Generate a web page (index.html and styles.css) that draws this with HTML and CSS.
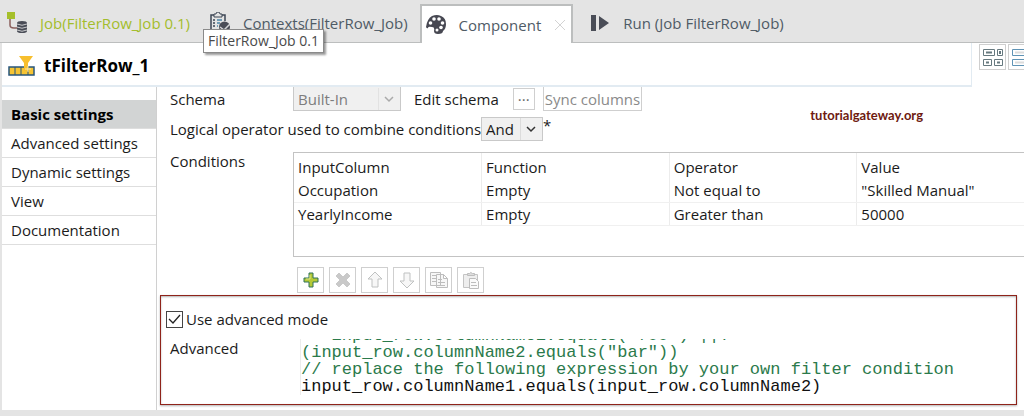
FILE: index.html
```html
<!DOCTYPE html>
<html lang="en">
<head>
    <meta charset="UTF-8">
    <meta name="viewport" content="width=device-width, initial-scale=1.0">
    <title>tFilterRow_1 - Component</title>
    <link rel="stylesheet" href="styles.css">
</head>
<body>
    <nav class="tabs">
        <a class="tab tab-job" href="#job">
            <svg class="tab-icon" width="22" height="22" viewBox="0 0 22 22">
                <path d="M4 6v7q0 3 4 3h4" fill="none" stroke="#8a5f5c" stroke-width="1.5"/>
                <rect x="1" y="0" width="8" height="7" fill="#a5bf2a"/>
                <path d="M11 11q0-2 5-2t5 2v8q0 2-5 2t-5-2z" fill="#4a4d57"/>
                <path d="M11 12q5 2.500 10 0M11 15q5 2.500 10 0M11 18q5 2.500 10 0" fill="none" stroke="#c9cacc"/>
            </svg>
            <span>Job(FilterRow_Job 0.1)</span>
        </a>
        <a class="tab tab-contexts" href="#contexts">
            <svg class="tab-icon" width="22" height="22" viewBox="0 0 22 22">
                <path d="M5 3H2v17h8M13 3h3v6" fill="none" stroke="#3c4654" stroke-width="1.500"/>
                <path d="M5 4V2h2q0-2 2-2t2 2h2v3H5z" fill="#e4e4e4" stroke="#3c4654"/>
                <path d="M4 8h2M4 11h2M4 14h2" stroke="#3c4654" stroke-width="1.500"/>
                <path d="M8 8h5M8 11h3M8 14h1" stroke="#4c87a8" stroke-width="1.500"/>
                <circle cx="15.500" cy="15" r="5.500" fill="#4a4d57"/>
                <path d="M11 15l4 3 6-6" fill="none" stroke="#d5d6d8" stroke-width="1.500"/>
            </svg>
            <span>Contexts(FilterRow_Job)</span>
            <span class="tooltip" role="tooltip">FilterRow_Job 0.1</span>
        </a>
        <div class="tab tab-active">
            <svg class="tab-icon" width="20" height="20" viewBox="0 0 20 20">
                <path d="M0 12Q1 4 6 1q5-2 9 0 5 2 5 8 0 5-3 7 0 3-5 3-4 0-4-3 1-4-2-4-4-1-4 1-1 1-2-1z" fill="#474852"/>
                <g fill="#fff">
                    <circle cx="4.500" cy="8" r="1.800"/>
                    <circle cx="8" cy="4" r="1.800"/>
                    <circle cx="13" cy="4" r="1.800"/>
                    <circle cx="16.500" cy="8" r="1.800"/>
                    <circle cx="15" cy="12.500" r="1.800"/>
                    <circle cx="11" cy="15" r="1.500"/>
                </g>
            </svg>
            <a href="#component">Component</a>
            <button class="tab-close" type="button" aria-label="Close">
                <svg width="12" height="12" viewBox="0 0 12 12"><path d="M1 1l10 10M11 1L1 11" stroke="#d3d3d3"/></svg>
            </button>
        </div>
        <a class="tab tab-run" href="#run">
            <svg class="tab-icon" width="18" height="16" viewBox="0 0 18 16">
                <path d="M0 0h5v16H0zM8 1l10 7-10 7z" fill="#4a4d57"/>
            </svg>
            <span>Run (Job FilterRow_Job)</span>
        </a>
    </nav>

    <div class="view">
        <header class="view-header">
            <div class="view-title">
                <svg width="28" height="22" viewBox="0 0 28 22">
                    <rect x="1" y="12" width="25" height="8" fill="#f6c433" stroke="#27567c" stroke-width="1.500"/>
                    <path d="M7 12v8M13 12v8M20 12v8" stroke="#27567c"/>
                    <path d="M11 1h14l-5 7v8h-4V8z" fill="#f7bf2e"/>
                    <path d="M20 11v6M17 14h6" stroke="#fbe7a5"/>
                </svg>
                <h1>tFilterRow_1</h1>
            </div>
            <div class="layout-buttons">
                <button type="button" aria-label="Grid layout">
                    <svg width="20" height="18" viewBox="0 0 20 18">
                        <g fill="none" stroke="#66797f" stroke-width="1">
                            <path d="M.5 1.500h11v6H.5zM14.500 1.500h5v6h-5zM.5 11.500h8v6h-8zM11.500 11.500h8v6h-8z"/>
                            <path d="M3 4.500h6M17 3v3M3 14.500h3M14 14.500h3" stroke-width="2"/>
                        </g>
                    </svg>
                </button>
                <button type="button" aria-label="List layout">
                    <svg width="20" height="18" viewBox="0 0 20 18">
                        <path d="M.5 1.500h19v6H.5zM.5 11.500h19v6H.5z" fill="#fff" stroke="#5f93b5"/>
                        <path d="M3 4.500h14M3 14.500h14" stroke="#dcdcdc" stroke-width="2"/>
                    </svg>
                </button>
            </div>
        </header>

        <div class="view-body">
            <nav class="sidebar">
                <a class="active" href="#basic">Basic settings</a>
                <a href="#advanced">Advanced settings</a>
                <a href="#dynamic">Dynamic settings</a>
                <a href="#view">View</a>
                <a href="#documentation">Documentation</a>
            </nav>

            <main class="settings">
                <div class="settings-top">
                    <div class="settings-rows">
                        <div class="row row-schema">
                            <label class="row-label" for="schema">Schema</label>
                            <select id="schema" class="select select-schema" disabled>
                                <option>Built-In</option>
                            </select>
                            <label class="edit-label" for="editSchema">Edit schema</label>
                            <button id="editSchema" class="edit-button" type="button">···</button>
                            <button class="sync-button" type="button" disabled>Sync columns</button>
                        </div>
                        <div class="row row-operator">
                            <label for="operator">Logical operator used to combine conditions</label>
                            <select id="operator" class="select select-operator">
                                <option>And</option>
                                <option>Or</option>
                            </select>
                            <span class="required">*</span>
                        </div>
                    </div>
                    <div class="site-mark">tutorialgateway.org</div>
                </div>

                <div class="conditions">
                    <div class="row-label" id="conditionsLabel">Conditions</div>
                    <div class="conditions-field">
                        <div class="table-box">
                            <table aria-labelledby="conditionsLabel">
                                <thead>
                                    <tr><th>InputColumn</th><th>Function</th><th>Operator</th><th>Value</th></tr>
                                </thead>
                                <tbody>
                                    <tr><td>Occupation</td><td>Empty</td><td>Not equal to</td><td>"Skilled Manual"</td></tr>
                                    <tr><td>YearlyIncome</td><td>Empty</td><td>Greater than</td><td>50000</td></tr>
                                </tbody>
                            </table>
                        </div>
                        <div class="table-actions">
                            <button type="button" aria-label="Add">
                                <svg width="18" height="18" viewBox="0 0 18 18"><path d="M7 2h4v5h5v4h-5v5H7v-5H2V7h5z" fill="#b5c936" stroke="#2f7358"/><path d="M8 4v4H4" fill="none" stroke="#dde28c"/></svg>
                            </button>
                            <button type="button" aria-label="Remove" disabled>
                                <svg width="18" height="18" viewBox="0 0 18 18"><path d="M5 2l4 4 4-4 3 3-4 4 4 4-3 3-4-4-4 4-3-3 4-4-4-4z" fill="#c9c9c9" stroke="#c9c9c9"/></svg>
                            </button>
                            <button type="button" aria-label="Move up" disabled>
                                <svg width="18" height="18" viewBox="0 0 18 18"><path d="M9 1l7 7h-4v8H6V8H2z" fill="#f7f7f7" stroke="#bfc1c1"/></svg>
                            </button>
                            <button type="button" aria-label="Move down" disabled>
                                <svg width="18" height="18" viewBox="0 0 18 18"><path d="M9 17l7-7h-4V2H6v8H2z" fill="#f7f7f7" stroke="#bfc1c1"/></svg>
                            </button>
                            <button type="button" aria-label="Copy" disabled>
                                <svg width="20" height="20" viewBox="0 0 20 20"><path d="M1.500 2.500h10v13h-10zM3 5.500h4M3 8.500h4M3 11.500h4M7.500 4.500h7l4 4v9h-11zM14.500 4.500v4h4M9 9.500h4M9 12.500h7M9 15.500h7" fill="#f7f7f7" stroke="#bdbdbd"/></svg>
                            </button>
                            <button type="button" aria-label="Paste" disabled>
                                <svg width="18" height="20" viewBox="0 0 18 20"><path d="M1.500 4.500h14v13h-14z" fill="#eee" stroke="#c4c4c4"/><path d="M5.500 5.500v-2h2q1-2 3 0h2v2z" fill="#ddd" stroke="#bdbdbd"/><path d="M7.500 8.500h6l3 3v7h-9zM9 12.500h5M9 15.500h6" fill="#fafafa" stroke="#bdbdbd"/></svg>
                            </button>
                        </div>
                    </div>
                </div>

                <section class="advanced">
                    <label class="advanced-toggle">
                        <input type="checkbox" checked>
                        <span>Use advanced mode</span>
                    </label>
                    <div class="advanced-row">
                        <div class="advanced-label" id="advancedLabel">Advanced</div>
                        <div class="editor" contenteditable="true" spellcheck="false" role="textbox" aria-multiline="true" aria-labelledby="advancedLabel">
                            <div class="line comment">   input_row.columnName1.equals("foo") ||!</div>
                            <div class="line comment">(input_row.columnName2.equals("bar"))</div>
                            <div class="line comment">// replace the following expression by your own filter condition</div>
                            <div class="line">input_row.columnName1.equals(input_row.columnName2)</div>
                        </div>
                    </div>
                </section>
            </main>
        </div>
    </div>
</body>
</html>
```
FILE: styles.css
```css
* { margin: 0; padding: 0; box-sizing: border-box; }
body { font-family: 'Open Sans', 'Noto Sans', sans-serif; font-size: 15px; line-height: 20px; color: #1b1b1b; background: #e4e4e4; min-height: 100vh; display: flex; flex-direction: column; overflow: hidden; }
button, select, input { font: inherit; color: inherit; }
button { display: flex; align-items: center; justify-content: center; background: #fff; border: 1px solid #cfcfcf; }
a { color: inherit; text-decoration: none; }
svg { display: block; flex: none; }

/* tabs */
.tabs { display: flex; height: 43px; padding-top: 4px; background: #e4e4e4; white-space: nowrap; color: #4f5b66; }
.tab { position: relative; display: flex; align-items: center; gap: 12px; padding: 0 12px 0 6px; border-bottom: 1px solid #bcbebe; }
.tab-job { color: #a3bd2c; padding-right: 13px; }
.tab-active { background: #fff; border: 1px solid #bcbebe; border-width: 2px 2px 0; padding: 0 5px 0 4px; gap: 13px; }
.tab-close { background: none; border: none; }
.tab-run { flex: 1; padding-left: 18px; gap: 14px; }
.tooltip { position: absolute; left: 0; top: 25px; z-index: 2; background: #fff; border: 1px solid #8a8a8a; box-shadow: 2px 2px 2px rgba(0, 0, 0, 0.4); padding: 1px 4px; color: #4a4a4a; font-size: 14px; }

/* view */
.view { flex: 1; display: flex; flex-direction: column; background: #fff; margin: 0 0 6px 2px; }
.view-header { display: flex; justify-content: space-between; gap: 7px; height: 44px; }
.view-title { flex: 1; display: flex; align-items: center; gap: 8px; padding: 4px 0 0 6px; border-right: 1px solid #e2ebf2; border-bottom: 2px solid #e2ebf2; }
.view-title h1 { font-size: 17px; line-height: 24px; font-weight: 700; color: #000; }
.layout-buttons { display: flex; gap: 2px; width: 45px; overflow: hidden; }
.layout-buttons button { flex: none; width: 27px; height: 26px; margin-top: 1px; }
.view-body { flex: 1; display: flex; }

/* sidebar */
.sidebar { width: 155px; padding-top: 13px; border-right: 1px solid #d0d0d0; }
.sidebar a { display: block; height: 29px; line-height: 28px; padding-left: 9px; border-bottom: 1px solid #dedede; }
.sidebar .active { background: #d2d4d4; color: #000; font-weight: 700; }

/* settings */
.settings { flex: 1; min-width: 0; display: flex; flex-direction: column; }
.settings-top { display: flex; align-items: center; justify-content: space-between; padding: 0 101px 0 13px; white-space: nowrap; }
.row { display: flex; }
.row-label { width: 123px; flex: none; }
.row-schema { align-items: center; height: 24px; }
.row-operator { align-items: center; height: 32px; padding-top: 4px; }
.select { appearance: none; height: 24px; padding-left: 4px; border: 1px solid #c9c9c9; border-radius: 0; background: #f0f0f0 url("data:image/svg+xml,%3Csvg xmlns='http://www.w3.org/2000/svg' width='22' height='22'%3E%3Cpath d='M.5 0v22' stroke='%23dcdcdc'/%3E%3Cpath d='M7 9l4 4 4-4' fill='none' stroke='%23333' stroke-width='1.500'/%3E%3C/svg%3E") no-repeat right center; }
.select-schema { width: 108px; border-top: none; color: #7d7d7d; opacity: 1; background-image: url("data:image/svg+xml,%3Csvg xmlns='http://www.w3.org/2000/svg' width='22' height='22'%3E%3Cpath d='M.5 0v22' stroke='%23e2e2e2'/%3E%3Cpath d='M7 9l4 4 4-4' fill='none' stroke='%23aaa' stroke-width='1.500'/%3E%3C/svg%3E"); }
.select-operator { width: 62px; }
.required { align-self: flex-start; }
.edit-label { margin: 0 14px 0 13px; }
.edit-button { width: 22px; height: 22px; margin-right: 8px; color: #666; }
.sync-button { height: 24px; padding: 0 1px; color: #8a8a8a; border-top: none; }
.site-mark { font-family: Lato, 'Open Sans', sans-serif; font-size: 13px; font-weight: 700; color: #6e1a10; }

.conditions { display: flex; padding: 9px 0 0 13px; }
.conditions .row-label { line-height: 18px; }
.conditions-field { flex: 1; min-width: 0; }
.table-box { height: 105px; border: 1px solid #c3c3c3; border-right: none; }
table { width: 100%; table-layout: fixed; border-collapse: collapse; }
th, td { height: 23px; padding: 0 4px; font-weight: 400; text-align: left; line-height: 22px; border-left: 1px solid #ececec; border-bottom: 1px solid #f0f0f0; white-space: nowrap; }
th { height: 26px; padding-top: 2px; border-bottom: none; }
th:first-child, td:first-child { border-left: none; }
th { width: 25.700%; }
th:last-child { width: auto; }
.table-actions { display: flex; gap: 5px; padding: 10px 4px 0; }
.table-actions button { width: 27px; height: 26px; }

/* advanced filter */
.advanced { flex: 1; margin: 2px 7px 5px 3px; padding: 13px 0 0 5px; border: 1px solid #8f231a; box-shadow: 0 1px 2px rgba(0, 0, 0, 0.3), inset 0 1px 2px rgba(0, 0, 0, 0.3); }
.advanced-toggle { display: flex; align-items: center; gap: 3px; width: max-content; }
.advanced-toggle input { appearance: none; width: 17px; height: 17px; border: 1px solid #444; background: #fff url("data:image/svg+xml,%3Csvg xmlns='http://www.w3.org/2000/svg' width='15' height='15'%3E%3Cpath d='M2 7l4 4 7-8' fill='none' stroke='%23222' stroke-width='1.300'/%3E%3C/svg%3E") center no-repeat; }
.advanced-row { display: flex; margin-top: 10px; padding-left: 4px; }
.advanced-label { width: 130px; flex: none; line-height: 18px; }
.editor { flex: 1; min-width: 0; height: 56px; display: flex; flex-direction: column; justify-content: flex-end; overflow: hidden; outline: none; border-left: 1px solid #ececec; font-family: 'Liberation Mono', monospace; font-size: 17px; color: #111; }
.line { flex: none; line-height: 17px; white-space: pre; }
.comment { color: #2b7a4b; }
```
